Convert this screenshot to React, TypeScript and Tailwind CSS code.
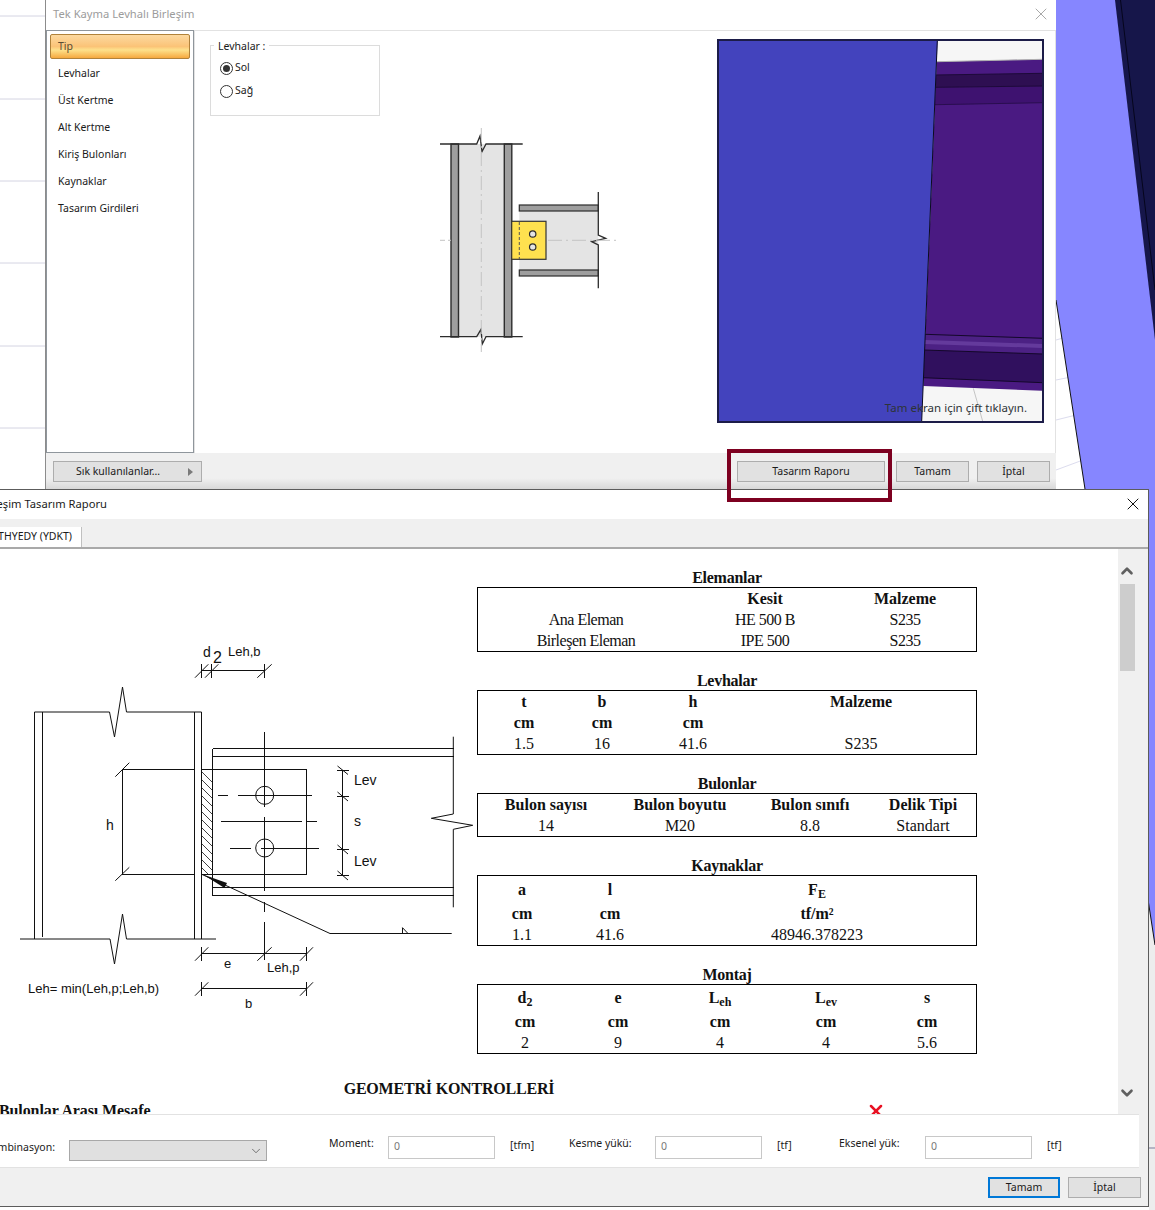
import type { ReactNode } from "react";
import { ChevronDown, ChevronUp, X } from "lucide-react";

const UI = "font-['Noto_Sans',sans-serif] text-[10.5px] text-[#1a1a1a]";

const menuItems = ["Tip", "Levhalar", "Üst Kertme", "Alt Kertme", "Kiriş Bulonları", "Kaynaklar", "Tasarım Girdileri"];

function Sub({ base, sub }: { base: string; sub: string }) {
  return (
    <span>
      {base}
      <sub className="text-[12px]">{sub}</sub>
    </span>
  );
}

type ReportTable = {
  title: string;
  columns: string;
  rows: { height: string; bold?: boolean; tight?: boolean; cells: ReactNode[] }[];
};

const tables: ReportTable[] = [
  {
    title: "Elemanlar",
    columns: "grid-cols-[218px_140px_140px]",
    rows: [
      { height: "h-[21px]", bold: true, cells: ["", "Kesit", "Malzeme"] },
      { height: "h-[21px]", tight: true, cells: ["Ana Eleman", "HE 500 B", "S235"] },
      { height: "h-[21px]", tight: true, cells: ["Birleşen Eleman", "IPE 500", "S235"] },
    ],
  },
  {
    title: "Levhalar",
    columns: "grid-cols-[94px_62px_120px_216px]",
    rows: [
      { height: "h-[21px]", bold: true, cells: ["t", "b", "h", "Malzeme"] },
      { height: "h-[21px]", bold: true, cells: ["cm", "cm", "cm", ""] },
      { height: "h-[21px]", cells: ["1.5", "16", "41.6", "S235"] },
    ],
  },
  {
    title: "Bulonlar",
    columns: "grid-cols-[138px_130px_130px_96px]",
    rows: [
      { height: "h-[21px]", bold: true, cells: ["Bulon sayısı", "Bulon boyutu", "Bulon sınıfı", "Delik Tipi"] },
      { height: "h-[21px]", cells: ["14", "M20", "8.8", "Standart"] },
    ],
  },
  {
    title: "Kaynaklar",
    columns: "grid-cols-[90px_86px_328px]",
    rows: [
      { height: "h-[27px]", bold: true, cells: ["a", "l", <Sub base="F" sub="E" />] },
      { height: "h-[21px]", bold: true, cells: ["cm", "cm", "tf/m²"] },
      { height: "h-[21px]", cells: ["1.1", "41.6", "48946.378223"] },
    ],
  },
  {
    title: "Montaj",
    columns: "grid-cols-[96px_90px_114px_98px_104px]",
    rows: [
      {
        height: "h-[26px]",
        bold: true,
        cells: [<Sub base="d" sub="2" />, "e", <Sub base="L" sub="eh" />, <Sub base="L" sub="ev" />, "s"],
      },
      { height: "h-[21px]", bold: true, cells: ["cm", "cm", "cm", "cm", "cm"] },
      { height: "h-[21px]", cells: ["2", "9", "4", "4", "5.6"] },
    ],
  },
];

function Button({ label, className = "border border-[#adadad]" }: { label: string; className?: string }) {
  return <div className={`flex h-[21px] items-center justify-center bg-[#e1e1e1] ${UI} ${className}`}>{label}</div>;
}

function DesktopBackground() {
  return (
    <svg className="absolute inset-0" width={1155} height={1210} viewBox="0 0 1155 1210">
      <rect width="1155" height="1210" fill="#ffffff" />
      {[16, 99, 181, 263, 346, 428].map((y) => (
        <line key={y} x1="0" y1={y} x2="45" y2={y} stroke="#d4d4e2" />
      ))}
      <rect x="1149" y="890" width="6" height="320" fill="#ededed" />
      <rect x="1149" y="1147" width="6" height="2" fill="#b4b4c4" />
      <path d="M1056 340L1070 336M1056 380L1076 376M1056 420L1080 414M1056 470L1083 460" stroke="#dcdcee" fill="none" />
      <polygon points="1056,0 1155,0 1155,945 1056,300" fill="#8686ff" />
      <polygon points="1115,0 1155,0 1155,340" fill="#16164a" />
      <line x1="1120.5" y1="0" x2="1155" y2="290" stroke="#05051c" />
      <line x1="1056" y1="300" x2="1155" y2="945" stroke="#111" />
    </svg>
  );
}

function TypeDrawing() {
  return (
    <svg width={200} height={240} viewBox="0 0 200 240" className="mt-[-1px]">
      <g transform="translate(-420,-128)">
        <rect x="451" y="144" width="61" height="193" fill="#e4e4e4" />
        <rect x="451" y="144" width="7.5" height="193" fill="#9e9e9e" stroke="#2c2c2c" strokeWidth="1.4" />
        <rect x="504.3" y="144" width="7.5" height="193" fill="#9e9e9e" stroke="#2c2c2c" strokeWidth="1.4" />
        <rect x="519.3" y="205" width="79" height="71" fill="#e4e4e4" />
        <rect x="519.3" y="205" width="79" height="6" fill="#9e9e9e" stroke="#2c2c2c" strokeWidth="1.2" />
        <rect x="519.3" y="270" width="79" height="6" fill="#9e9e9e" stroke="#2c2c2c" strokeWidth="1.2" />
        <path
          d="M440 144H476.7L480 136L482 151.7L486 144H522.7M440 336.7H476.7L481 329.3L482.3 344L486 336.7H522.7M598.3 192V235L605.7 238.3L591.7 241.7L598.3 245V288.3"
          fill="none"
          stroke="#2c2c2c"
          strokeWidth="1.3"
        />
        <line x1="481.3" y1="128" x2="481.3" y2="352" stroke="#c4c4c4" strokeDasharray="14 4 2 4" />
        <line x1="440" y1="240.3" x2="451" y2="240.3" stroke="#c4c4c4" strokeDasharray="5 3" />
        <line x1="548" y1="240.3" x2="616" y2="240.3" stroke="#c4c4c4" strokeDasharray="14 4 2 4" />
        <rect x="511.7" y="221.3" width="34.3" height="38" fill="#ffe14f" stroke="#333" strokeWidth="1.2" />
        <line x1="519.3" y1="222" x2="519.3" y2="259" stroke="#555" strokeDasharray="3 2" />
        <circle cx="532.7" cy="234" r="3.2" fill="#e4e4e4" stroke="#2c2c2c" strokeWidth="1.2" />
        <circle cx="532.7" cy="247" r="3.2" fill="#e4e4e4" stroke="#2c2c2c" strokeWidth="1.2" />
      </g>
    </svg>
  );
}

function ModelPreview() {
  return (
    <div className="relative h-[384px] w-[327px] border-2 border-[#1c1c48]">
      <svg width={323} height={380} viewBox="719 41 323 380" className="block">
        <rect x="719" y="41" width="323" height="380" fill="#f6f6f6" />
        <polygon points="936.7,61.7 1042.7,59.3 1042.7,390.7 923.3,386" fill="#4a1a82" />
        <polygon points="935.7,75 1042.7,73.3 1042.7,86 935.3,87.3" fill="#2e0f52" />
        <polygon points="935.3,87.3 1042.7,86 1042.7,102.7 935,104.7" fill="#3e1270" />
        <polygon points="925,334.3 1042.7,338.3 1042.7,354 924,350" fill="#4c2184" />
        <polygon points="925,340 1042.7,344 1042.7,348 925,344" fill="#643a9c" />
        <polygon points="924,350 1042.7,354 1042.7,382.7 923.3,377.7" fill="#30105e" />
        <line x1="935.7" y1="75" x2="1042.7" y2="73.3" stroke="#1e0a3a" />
        <line x1="935.3" y1="87.3" x2="1042.7" y2="86" stroke="#1e0a3a" />
        <line x1="935" y1="104.7" x2="1042.7" y2="102.7" stroke="#2a0e50" />
        <line x1="925" y1="334.3" x2="1042.7" y2="338.3" stroke="#14082a" />
        <line x1="924" y1="350" x2="1042.7" y2="354" stroke="#14082a" />
        <line x1="923.3" y1="377.7" x2="1042.7" y2="382.7" stroke="#14082a" />
        <line x1="936.7" y1="61.7" x2="1042.7" y2="59.3" stroke="#b0b0b0" />
        <line x1="973.3" y1="388.3" x2="982.7" y2="421.3" stroke="#c4c4c4" />
        <polygon points="719,41 937.6,41 921.7,421 719,421" fill="#4343bd" />
        <line x1="937.3" y1="41" x2="921.7" y2="421" stroke="#0a0a20" />
      </svg>
      <span className="absolute bottom-[5px] right-[15px] whitespace-nowrap font-['Noto_Sans',sans-serif] text-[11.5px] text-[#2e3436]">
        Tam ekran için çift tıklayın.
      </span>
    </div>
  );
}

function FirstWindow() {
  return (
    <div className="absolute left-[45px] top-0 flex h-[489px] w-[1011px] flex-col border-l border-[#8c8c8c] bg-[#f0f0f0]">
      <div className="flex h-[30px] shrink-0 items-center justify-between bg-white pb-[2px] pl-[7px] pr-[5px]">
        <span className="font-['Noto_Sans',sans-serif] text-[11.2px] text-[#9c9c9c]">Tek Kayma Levhalı Birleşim</span>
        <X size={20} strokeWidth={0.9} className="text-[#8a8a8a]" />
      </div>
      <div className="flex h-[423px] shrink-0">
        <div className={`w-[148px] shrink-0 border border-[#8f969c] bg-white p-[3px] ${UI}`}>
          {menuItems.map((item, i) => (
            <div
              key={item}
              className={
                i === 0
                  ? "flex h-[25px] items-center rounded-[2px] border border-[#b0823a] bg-[linear-gradient(#fcd9a0_0%,#fbc377_50%,#fde18c_65%,#f6a93f_100%)] pl-[7px] text-[#5a4a32]"
                  : "mt-[2px] flex h-[25px] items-center pl-[8px]"
              }
            >
              {item}
            </div>
          ))}
        </div>
        <div className="flex min-w-0 flex-1 border-r border-t border-l border-[#e2e2e2] bg-white">
          <div className="w-[195px] shrink-0 pl-[15px] pt-[14px]">
            <div className={`relative h-[71px] w-[170px] border border-[#dcdcdc] ${UI}`}>
              <span className="absolute left-[3px] top-[-7px] bg-white px-[4px] leading-[14px]">Levhalar :</span>
              <div className="flex flex-col gap-[7px] pl-[9px] pt-[14px]">
                <label className="flex h-[16px] items-center gap-[2px]">
                  <span className="flex h-[13px] w-[13px] items-center justify-center rounded-full border border-[#333]">
                    <span className="h-[7px] w-[7px] rounded-full bg-[#333]" />
                  </span>
                  Sol
                </label>
                <label className="flex h-[16px] items-center gap-[2px]">
                  <span className="h-[13px] w-[13px] rounded-full border border-[#333]" />
                  Sağ
                </label>
              </div>
            </div>
          </div>
          <div className="w-[307px] shrink-0 pl-[30px] pt-[98px]">
            <TypeDrawing />
          </div>
          <div className="pl-[20px] pt-[8px]">
            <ModelPreview />
          </div>
        </div>
      </div>
      <div className="flex flex-1 items-start bg-[linear-gradient(#f0f0f0_70%,#d8d8d8)] pl-[7px] pt-[8px]">
        <div className={`flex h-[21px] w-[149px] items-center justify-center gap-[28px] border border-[#adadad] bg-[#e1e1e1] pl-[14px] ${UI}`}>
          Sık kullanılanlar…
          <span className="h-0 w-0 border-y-[4px] border-l-[5px] border-y-transparent border-l-[#7a7a7a]" />
        </div>
        <Button label="Tasarım Raporu" className="ml-[535px] w-[148px] border border-[#adadad]" />
        <Button label="Tamam" className="ml-[11px] w-[73px] border border-[#adadad]" />
        <Button label="İptal" className="ml-[8px] w-[73px] border border-[#adadad]" />
      </div>
    </div>
  );
}

function ConnectionDrawing() {
  const ink = "#111111";
  return (
    <svg width={477} height={565} viewBox="0 549 477 565" className="shrink-0" shapeRendering="crispEdges">
      <g fill="none" stroke={ink} strokeWidth="1">
        <path d="M34.5 939V712H109.5L114.5 737L122.5 687L126.5 712H201.5V939" shapeRendering="auto" />
        <path d="M42.5 712V937M194.5 712V939" />
        <path d="M20 939H110L114.5 964L122.5 914L126.5 939H216" shapeRendering="auto" />
        <path d="M194.5 769.5H122.5V874.5H194.5M201.5 769.5H306.5V874.5H201.5" />
        <path d="M115.3 776.7L129.3 762.7M115.3 880.7L129.3 867.3" shapeRendering="auto" />
        <path d="M212.5 748.5H453.5M212.5 756.5H453.5M212.5 887.5H453.5M212.5 895.5H453.5M212.5 748.5V895.5" />
        <path d="M453.3 736.7V814L431.3 818.3L472.7 825.3L453.3 829.3V907.3" shapeRendering="auto" />
        <circle cx="264.7" cy="795.3" r="9" shapeRendering="auto" />
        <circle cx="264.7" cy="848" r="9" shapeRendering="auto" />
        <path d="M264.5 732V806.5M264.5 816.5V890.5M264.5 901.5V911.5M264.5 922V960" />
        <path d="M218 795.5H228M238 795.5H312M221 821.5H302M306.5 821.5H316.5M230 848.5H250.5M261 848.5H318.5" />
        <path d="M342.5 770V875M337 770.5H349M337 796.5H349M337 849.5H349M337 875.5H349" />
        <path d="M337.5 766L348 774.5M337.5 792L348 801M337.5 845L348 854M337.5 871L348 880" shapeRendering="auto" />
        <path
          d="M202 772L212 782M202 780L212 790M202 788L212 798M202 796L212 806M202 804L212 814M202 812L212 822M202 820L212 830M202 828L212 838M202 836L212 846M202 844L212 854M202 852L212 862M202 860L212 870M202 868L209 875"
          shapeRendering="auto"
          strokeWidth="0.8"
        />
        <path d="M201.7 874.3L330 933.5H451.7" shapeRendering="auto" />
        <path d="M402.5 927.7V933.5H408Z" shapeRendering="auto" />
        <path d="M201.5 664V678M211.5 664V678M264.5 664V678M201.5 670.5H264.5" />
        <path d="M195 677.7L208.3 664.3M205 677.7L218.3 664.3M257.3 677.7L271.7 664.3" shapeRendering="auto" />
        <path d="M201.5 947V961M306.5 947V961M201.5 953.5H307M201.5 982V996M306.5 982V996M201.5 988.5H306.5" />
        <path d="M195 960.7L208.3 947.3M257.3 960.7L271.7 947.3M300 960.7L313 947.3" shapeRendering="auto" />
        <path d="M195 995.7L208.3 982.3M300 995.7L313 982.3" shapeRendering="auto" />
      </g>
      <polygon points="203,874.5 227,883 224.5,888" fill={ink} shapeRendering="auto" />
      <g fontFamily="'Liberation Sans', sans-serif" fontSize="14" fill={ink}>
        <text x="203" y="657">d</text>
        <text x="213" y="663" fontSize="16">2</text>
        <text x="228" y="656" fontSize="13">Leh,b</text>
        <text x="354" y="785">Lev</text>
        <text x="354" y="826">s</text>
        <text x="354" y="866">Lev</text>
        <text x="106" y="830">h</text>
        <text x="224" y="968" fontSize="13">e</text>
        <text x="267" y="972" fontSize="13">Leh,p</text>
        <text x="245" y="1008" fontSize="13">b</text>
        <text x="28" y="993" fontSize="13">Leh= min(Leh,p;Leh,b)</text>
      </g>
    </svg>
  );
}

function Report() {
  return (
    <div className="relative h-[565px] min-w-0 flex-1 overflow-hidden bg-white font-['Liberation_Serif',serif] text-[16px] leading-[18px] text-[#111]">
      <div className="flex">
        <ConnectionDrawing />
        <div className="w-[500px] pt-[20px]">
          {tables.map((t) => (
            <div key={t.title} className="mb-[20px]">
              <div className="h-[18px] text-center font-bold tracking-[-0.25px]">{t.title}</div>
              <div className="border border-black">
                {t.rows.map((row, r) => (
                  <div
                    key={r}
                    className={`-ml-px grid ${t.columns} ${row.height} items-center ${row.bold ? "font-bold" : ""} ${row.tight ? "tracking-[-0.5px]" : ""}`}
                  >
                    {row.cells.map((cell, c) => (
                      <div key={c} className="whitespace-nowrap text-center">
                        {cell}
                      </div>
                    ))}
                  </div>
                ))}
              </div>
            </div>
          ))}
        </div>
      </div>
      <div className="absolute left-0 top-[531px] w-[898px] text-center font-bold tracking-[-0.2px]">GEOMETRİ KONTROLLERİ</div>
      <div className="absolute left-[-1px] top-[553px] whitespace-nowrap font-bold tracking-[-0.1px]">Bulonlar Arası Mesafe</div>
      <X className="absolute left-[866px] top-[552px] text-[#e81123]" size={20} strokeWidth={3} />
    </div>
  );
}

function Field({ label, unit, labelWidth, unitWidth }: { label: string; unit: string; labelWidth: string; unitWidth: string }) {
  return (
    <div className="flex items-start">
      <span className={`${labelWidth} leading-[14px]`}>{label}</span>
      <div className="flex h-[23px] w-[107px] items-center border border-[#c8c8c8] bg-white pb-[2px] pl-[5px] text-[#777]">0</div>
      <span className={`${unitWidth} pl-[15px] leading-[18px]`}>{unit}</span>
    </div>
  );
}

function SecondWindow() {
  return (
    <div className="absolute left-[-200px] top-[489px] flex h-[718px] w-[1349px] flex-col border-r border-b border-t border-[#5c5c5c] bg-[#f0f0f0]">
      <div className="flex h-[29px] shrink-0 items-center justify-between bg-white pb-[1px] pr-[5px]">
        <span className="w-[307px] whitespace-nowrap text-right font-['Noto_Sans',sans-serif] text-[11.2px] text-[#1a1a1a]">
          Tek Kayma Levhalı Birleşim Tasarım Raporu
        </span>
        <X size={20} strokeWidth={1.2} className="text-[#111]" />
      </div>
      <div className="flex h-[30px] shrink-0 items-end border-b-2 border-[#a9a9a9]">
        <div className={`flex h-[20px] w-[282px] items-center justify-end border-r border-[#c0c0c0] bg-white pb-[1px] pr-[9px] ${UI}`}>
          THYEDY (YDKT)
        </div>
      </div>
      <div className="flex shrink-0 pl-[200px] pr-[12px]">
        <Report />
        <div className="flex h-[565px] w-[18px] shrink-0 flex-col items-center bg-[#f0f0f0]">
          <ChevronUp size={18} strokeWidth={3.5} className="mt-[13px] text-[#606060]" />
          <div className="mt-[4px] h-[87px] w-[15px] bg-[#cdcdcd]" />
          <ChevronDown size={18} strokeWidth={3.5} className="mt-[413px] text-[#606060]" />
        </div>
      </div>
      <div className={`mr-[9px] flex h-[54px] shrink-0 items-start border-b border-t border-[#e2e2e2] bg-white pt-[21px] ${UI}`}>
        <span className="w-[255px] pt-[4px] text-right leading-[14px]">Kombinasyon:</span>
        <div className="ml-[14px] mt-[4px] flex h-[21px] w-[198px] items-center justify-end border border-[#a8a8a8] bg-[#e0e0e0] pr-[3px]">
          <ChevronDown size={14} strokeWidth={1.2} className="text-[#444]" />
        </div>
        <div className="ml-[62px] flex">
          <Field label="Moment:" unit="[tfm]" labelWidth="w-[59px]" unitWidth="w-[74px]" />
          <Field label="Kesme yükü:" unit="[tf]" labelWidth="w-[86px]" unitWidth="w-[77px]" />
          <Field label="Eksenel yük:" unit="[tf]" labelWidth="w-[86px]" unitWidth="w-[60px]" />
        </div>
      </div>
      <div className="flex flex-1 items-start justify-end pr-[7px] pt-[9px]">
        <Button label="Tamam" className="w-[72px] border-2 border-[#0078d7]" />
        <Button label="İptal" className="ml-[8px] w-[73px] border border-[#adadad]" />
      </div>
    </div>
  );
}

export default function App() {
  return (
    <div className="relative h-[1210px] w-[1155px] overflow-hidden bg-white">
      <DesktopBackground />
      <FirstWindow />
      <div className="absolute left-[727px] top-[449px] h-[53px] w-[165px] border-[4px] border-[#7d0020]" />
      <SecondWindow />
      <div className="absolute left-[727px] top-[489px] h-[13px] w-[165px] border-x-[4px] border-b-[4px] border-[#7d0020]" />
    </div>
  );
}
